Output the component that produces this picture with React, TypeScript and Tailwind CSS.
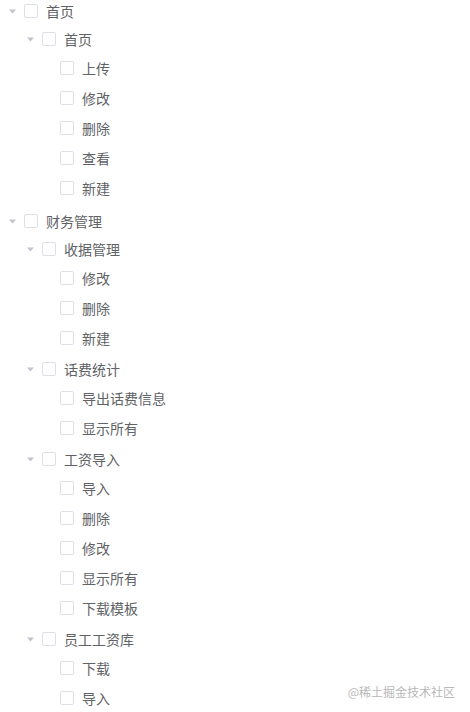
type TreeNode = {
  label: string
  children?: TreeNode[]
}

const tree: TreeNode[] = [
  {
    label: "首页",
    children: [
      {
        label: "首页",
        children: [
          { label: "上传" },
          { label: "修改" },
          { label: "删除" },
          { label: "查看" },
          { label: "新建" },
        ],
      },
    ],
  },
  {
    label: "财务管理",
    children: [
      {
        label: "收据管理",
        children: [{ label: "修改" }, { label: "删除" }, { label: "新建" }],
      },
      {
        label: "话费统计",
        children: [{ label: "导出话费信息" }, { label: "显示所有" }],
      },
      {
        label: "工资导入",
        children: [
          { label: "导入" },
          { label: "删除" },
          { label: "修改" },
          { label: "显示所有" },
          { label: "下载模板" },
        ],
      },
      {
        label: "员工工资库",
        children: [{ label: "下载" }, { label: "导入" }],
      },
    ],
  },
]

function Caret() {
  return (
    <svg width="7" height="5" viewBox="0 0 7 5" className="block">
      <path d="M0 0.5h7L3.5 4.5z" fill="#c0c4cc" />
    </svg>
  )
}

function Row({ node, level, first }: { node: TreeNode; level: number; first: boolean }) {
  const hasChildren = !!node.children
  const margin = !first && hasChildren ? (level === 0 ? "mt-[4px]" : "mt-[2px]") : ""
  const indent = level === 0 ? "pl-0" : level === 1 ? "pl-[18px]" : "pl-[36px]"
  return (
    <div className={margin}>
      <div className={`flex items-center ${indent} ${hasChildren ? "h-[28px]" : "h-[30px]"}`}>
        <span className="w-[24px] flex items-center justify-center">{hasChildren && <Caret />}</span>
        <span className="w-[14px] h-[14px] rounded-[2px] border border-[#dcdfe6] bg-white box-border" />
        <span className="ml-[8px] text-[14px] text-[#606266] leading-none">{node.label}</span>
      </div>
      {node.children?.map((c, i) => (
        <Row key={c.label + i} node={c} level={level + 1} first={i === 0} />
      ))}
    </div>
  )
}

export default function App() {
  return (
    <div
      className="relative w-[470px] h-[712px] overflow-hidden bg-white"
      style={{ fontFamily: '"Noto Sans CJK SC", "Noto Sans", sans-serif' }}
    >
      <div className="-mt-[3px]">
        {tree.map((n, i) => (
          <Row key={n.label} node={n} level={0} first={i === 0} />
        ))}
      </div>
      <div className="absolute right-[15px] bottom-[14px] text-[12px] text-[#b8b8b8] leading-none">
        @稀土掘金技术社区
      </div>
    </div>
  )
}
